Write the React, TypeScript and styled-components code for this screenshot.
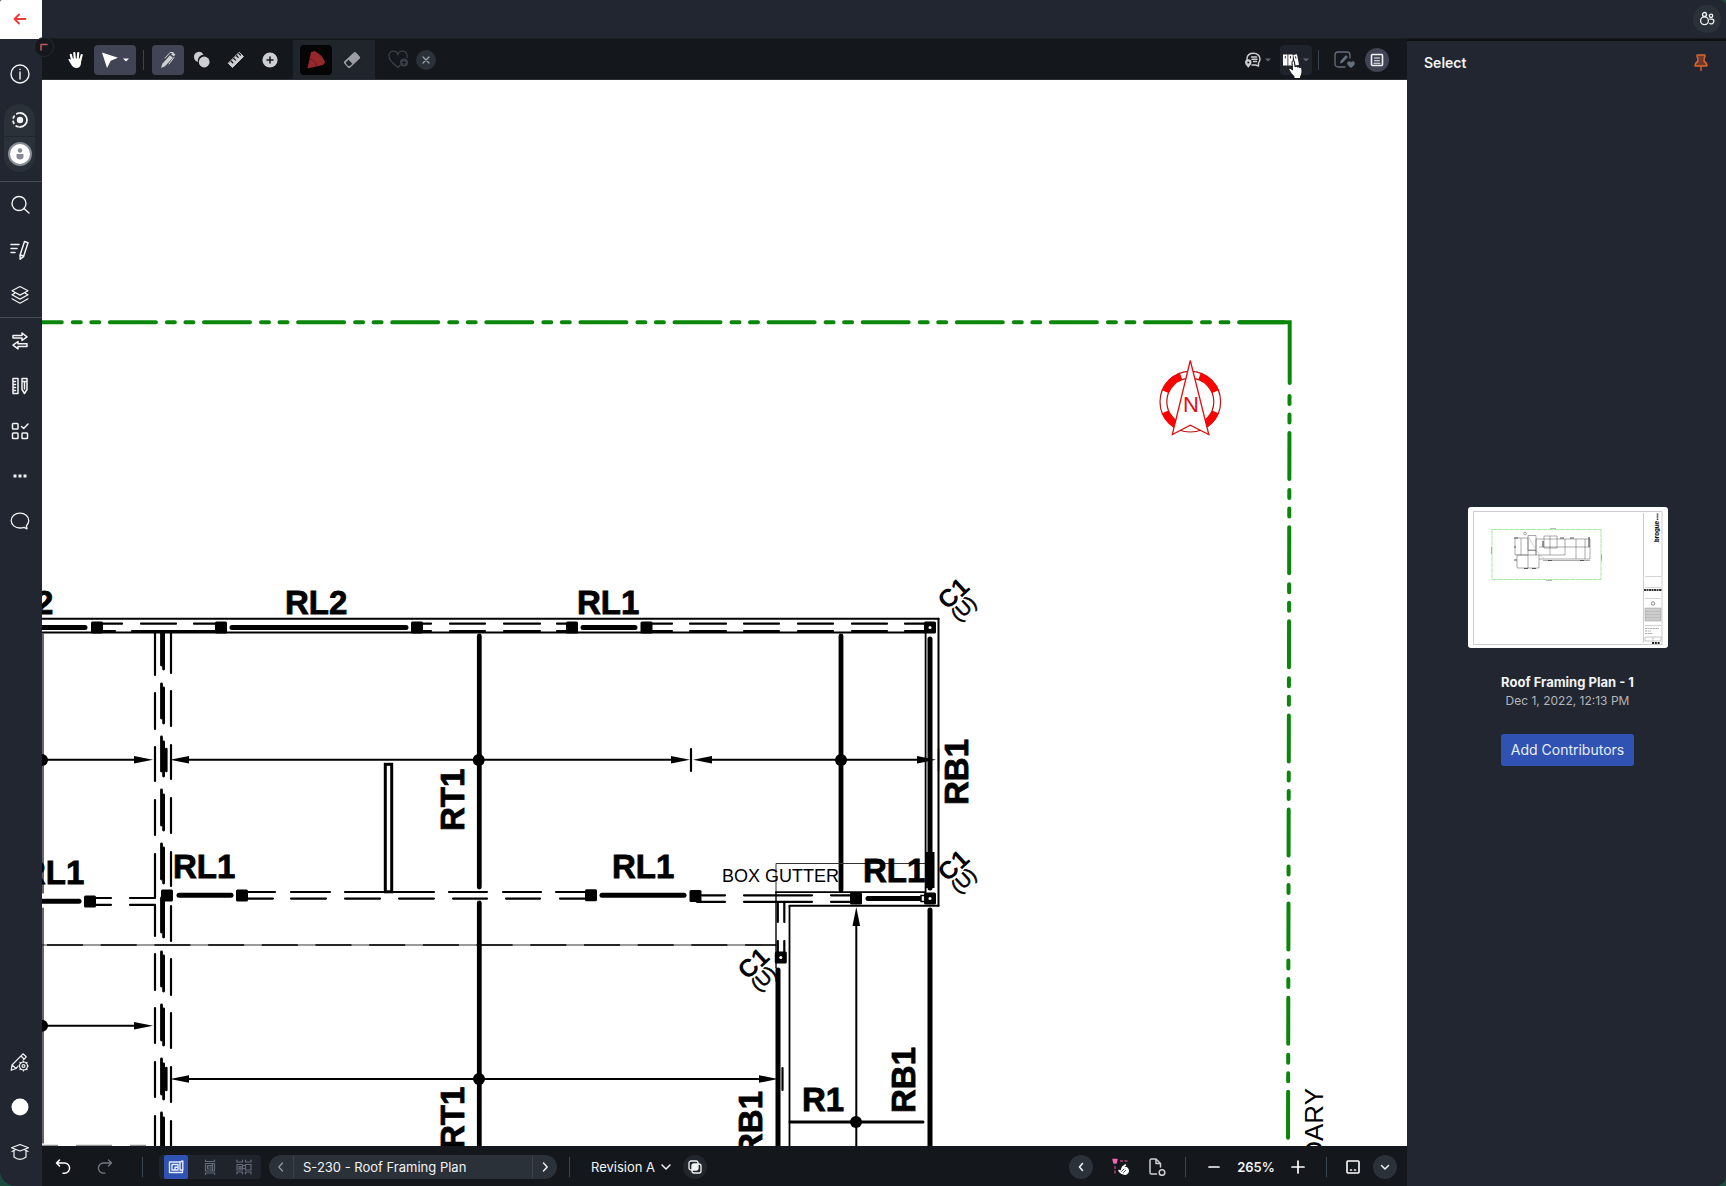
import React from 'react';
import styled, { createGlobalStyle, css } from 'styled-components';

const c = {
  shell: '#222630',
  bar: '#14171c',
  raised: '#2a3139',
  hover: '#404454',
  line: '#3a4450',
  soft: '#8b929c',
  text: '#f2f3f5',
  blue: '#3053b3',
};

const Global = createGlobalStyle`
  *, *::before, *::after { box-sizing: border-box; }
  html, body { margin: 0; background: #1d4a3f; }
  body { font-family: Inter, "Liberation Sans", sans-serif; color: ${c.text}; }
  button { font: inherit; color: inherit; border: 0; padding: 0; background: none; cursor: pointer; }
  h1, h2, p { margin: 0; }
`;

/* ---------- layout ---------- */

const Shell = styled.div`
  display: flex;
  height: 100vh;
  overflow: hidden;
  background: ${c.shell};
  border-radius: 2px 6px 10px 16px;
`;

const Sidebar = styled.nav`
  display: flex;
  flex-direction: column;
  flex: none;
  width: 42px;
  background: ${c.shell};
`;

const Column = styled.div`
  display: flex;
  flex-direction: column;
  flex: 1;
  min-width: 0;
`;

const Header = styled.header`
  display: flex;
  justify-content: flex-end;
  align-items: center;
  flex: none;
  height: 39px;
  padding-right: 5px;
  border-bottom: 1px solid #181b22;
`;

const Body = styled.div`
  display: flex;
  flex: 1;
  min-height: 0;
`;

const Work = styled.main`
  display: flex;
  flex-direction: column;
  flex: 1;
  min-width: 0;
`;

const TopBar = styled.div`
  position: relative;
  display: flex;
  justify-content: space-between;
  flex: none;
  height: 41px;
  padding: 1px 18px 0 18px;
  background: ${c.bar};
  border-bottom: 1px solid #2b3038;
`;

const Tools = styled.div<{ $gap: number }>`
  display: flex;
  align-items: center;
  gap: ${(p) => p.$gap}px;
`;

const Sheet = styled.div`
  flex: 1;
  min-height: 0;
  background: #fff;
`;

const Drawing = styled.svg`
  display: block;
  width: 100%;
  height: 100%;
`;

const BottomBar = styled.footer`
  display: flex;
  justify-content: space-between;
  flex: none;
  height: 40px;
  padding: 2px 10px 0 5px;
  background: ${c.bar};
`;

const Panel = styled.aside`
  display: flex;
  flex-direction: column;
  flex: none;
  width: 319px;
  border-top: 2px solid #0d0f13;
`;

/* ---------- controls ---------- */

const Back = styled.button`
  display: grid;
  place-items: center;
  flex: none;
  height: 39px;
  padding: 0 3px 2px 0;
  background: #fff;
`;

const SideGroup = styled.div<{ $rule?: boolean; $end?: boolean }>`
  display: flex;
  flex-direction: column;
  padding-right: 3px;
  ${(p) => p.$rule && css`border-bottom: 1px solid #454a54;`}
  ${(p) => p.$end && css`margin-top: auto; padding-bottom: 12px;`}
`;

const SideButton = styled.button`
  display: grid;
  place-items: center;
  height: 45px;
`;

const InfoGroup = styled(SideGroup)`
  height: 143px;
  padding-top: 12px;
  align-items: center;
`;

const Pill = styled.div`
  display: flex;
  flex-direction: column;
  width: 31px;
  margin-top: 8px;
  border-radius: 16px;
  background: ${c.raised};
`;

const PillButton = styled.button`
  display: grid;
  place-items: center;
  height: 32px;
  & + & { height: 36px; padding-bottom: 2px; border-top: 1px solid ${c.shell}; }
`;

const Avatar = styled.span`
  display: grid;
  place-items: center;
  width: 24px;
  height: 24px;
  border: 2px solid #868b94;
  border-radius: 50%;
  background: #fff;
`;

const Tool = styled.button<{ $w?: number; $tone?: string; $ink?: string; $lead?: number }>`
  position: relative;
  display: flex;
  align-items: center;
  justify-content: center;
  gap: 4px;
  width: ${(p) => p.$w ?? 32}px;
  height: 30px;
  padding-left: ${(p) => p.$lead ?? 0}px;
  border-radius: 4px;
  background: ${(p) => p.$tone ?? 'transparent'};
  color: ${(p) => p.$ink ?? '#cdced1'};
`;

const Round = styled.button<{ $size?: number; $tone?: string; $ink?: string }>`
  display: grid;
  place-items: center;
  flex: none;
  width: ${(p) => p.$size ?? 24}px;
  height: ${(p) => p.$size ?? 24}px;
  border-radius: 50%;
  background: ${(p) => p.$tone ?? c.raised};
  color: ${(p) => p.$ink ?? c.text};
`;

const Rule = styled.span<{ $l?: number; $r?: number }>`
  width: 1px;
  height: 20px;
  margin: 0 ${(p) => p.$r ?? 0}px 0 ${(p) => p.$l ?? 0}px;
  background: ${c.line};
`;

const BrushGroup = styled.div`
  display: flex;
  align-items: center;
  gap: 4px;
  height: 39px;
  margin: 0 5px 0 5px;
  padding: 0 7px;
  background: #20242b;
`;

const Corner = styled.button`
  position: absolute;
  left: -8px;
  top: -2px;
  width: 20px;
  height: 20px;
  border-radius: 50%;
  background: #14171c;
  border: 1px solid #242933;
  display: grid;
  place-items: center;
`;

const Pointer = styled.svg`
  position: absolute;
  left: 7px;
  top: 15px;
`;

const Segments = styled.div`
  display: flex;
  gap: 10px;
  padding: 0 5px;
  border-radius: 4px;
  background: #1f232c;
`;

const Segment = styled.button<{ $on?: boolean }>`
  display: grid;
  place-items: center;
  width: 24px;
  height: 24px;
  border-radius: 2px;
  background: ${(p) => (p.$on ? c.blue : 'transparent')};
  color: ${(p) => (p.$on ? '#e6ebf8' : '#626a77')};
`;

const PageNav = styled.div`
  display: flex;
  align-items: center;
  width: 288px;
  height: 24px;
  border-radius: 12px;
  background: ${c.raised};
`;

const PageStep = styled.button<{ $dim?: boolean }>`
  display: grid;
  place-items: center;
  width: 24px;
  height: 24px;
  color: ${(p) => (p.$dim ? '#9299a3' : c.text)};
`;

const PageName = styled.span`
  flex: 1;
  padding-left: 9px;
  border: solid #3b434d;
  border-width: 0 1px;
  font-size: 13px;
  line-height: 22px;
`;

const Revision = styled.button`
  display: flex;
  align-items: center;
  justify-content: space-between;
  width: 84px;
  padding-right: 3px;
  font-size: 13px;
  line-height: 24px;
  white-space: nowrap;
`;

const Zoom = styled.output`
  width: 44px;
  text-align: center;
  font-size: 13px;
  font-weight: 600;
`;

const PanelHead = styled.div`
  display: flex;
  align-items: center;
  justify-content: space-between;
  height: 43px;
  padding: 0 16px 0 17px;
`;

const PanelTitle = styled.h1`
  font-size: 14px;
  font-weight: 600;
  line-height: 20px;
`;

const Card = styled.section`
  display: flex;
  flex: 1;
  flex-direction: column;
  align-items: center;
  justify-content: center;
  padding: 2px 0 0 2px;
`;

const Thumb = styled.svg`
  width: 200px;
  height: 141px;
  border-radius: 3px;
  background: #fff;
  margin-bottom: 24px;
`;

const CardTitle = styled.h2`
  font-size: 13px;
  font-weight: 700;
  line-height: 20px;
`;

const CardDate = styled.p`
  font-size: 12px;
  line-height: 18px;
  color: #b3b6bb;
  margin-bottom: 24px;
`;

const Primary = styled.button`
  height: 32px;
  width: 133px;
  border-radius: 3px;
  background: ${c.blue};
  font-size: 14px;
  color: #e9edf7;
`;

/* ---------- icons ---------- */

type IcoProps = { s?: number; w?: number; sw?: number; children: React.ReactNode };
const Ico = ({ s = 20, w, sw = 1.5, children }: IcoProps) => (
  <svg width={w ?? s} height={s} viewBox={`0 0 ${w ?? s} ${s}`} fill="none" stroke="currentColor"
    strokeWidth={sw} strokeLinecap="round" strokeLinejoin="round" aria-hidden="true">{children}</svg>
);
const solid = { fill: 'currentColor', stroke: 'none' };

const Caret = () => <Ico s={6} sw={0}><path d="M0 1.500h6L3 4.500z" {...solid} /></Ico>;

const Gear = ({ x, y }: { x: number; y: number }) => (
  <g transform={`translate(${x} ${y})`}>
    <circle r="4" /><circle r="1.4" />
    {[0, 45, 90, 135, 180, 225, 270, 315].map((a) => <path key={a} d="M0-4v-1" transform={`rotate(${a})`} />)}
  </g>
);

const sideMain = [
  { label: 'Search', icon: <Ico sw={1.4}><circle cx="9" cy="8.500" r="7" /><path d="M14 13.500l5 4.500" /></Ico> },
  { label: 'Markups', icon: <Ico sw={1.5}><path d="M1 4.500h8M1 8.500h6M1 12.500h4M14.500 1.500l3.500 1.200-4.500 14-3.300 2.500-.2-4z" /><path d="M10.500 15l2.700 1" /></Ico> },
  { label: 'Layers', icon: <Ico sw={1.2}><path d="M10 1.500l8 4.300-8 4.300-8-4.300zM2 9.800l8 4.300 8-4.300M2 13.800l8 4.400 8-4.400M2 9.800l2.600-1.400M18 9.800l-2.600-1.400" /></Ico> },
];
const sideTools = [
  { label: 'Compare', icon: <Ico sw={1.5}><path d="M3 4.500h9V2l5 3.800L12 9.500V7H3zM17 12.800H8v-2.300l-5 3.700 5 3.700v-2.500h9z" /></Ico> },
  { label: 'Measurements', icon: <Ico sw={1.5}><path d="M3 2.500h5v15H3zM3.500 5.500h2M3.500 8.500h2M3.500 11.500h2M3.500 14.500h2M12 2.500h5v11l-2.500 4-2.500-4zM12 5.500h5M14.500 6v7" /></Ico> },
  { label: 'Checklists', icon: <Ico sw={1.5}><rect x="2.500" y="2.500" width="5.500" height="5.500" rx=".8" /><rect x="2.500" y="12" width="5.500" height="5.500" rx=".8" /><rect x="12" y="12" width="5.500" height="5.500" rx=".8" /><path d="M11.500 5.500l2.200 2L18 3" /></Ico> },
  { label: 'More', icon: <Ico><path d="M3.500 8.500h3v3h-3zM8.500 8.500h3v3h-3zM13.500 8.500h3v3h-3z" {...solid} /></Ico> },
  { label: 'Comments', icon: <Ico sw={1.3}><path d="M10 2.200c-5 0-8.800 3.200-8.800 7.400S5 17 10 17c1.500 0 2.800-.2 4-.7l3 1.500-.6-3c1.500-1.400 2.300-3.200 2.300-5.200 0-4.200-3.700-7.400-8.700-7.400z" /></Ico> },
];
const sideEnd = [
  { label: 'Markup settings', icon: <Ico sw={1.2}><path d="M2 13L13 1.800l3.200 3L6 16.500l-4.800 1.800zM2 13l3.800 3.200M11 4l3 3" /><circle cx="13.500" cy="14" r="5.800" fill={c.shell} stroke="none" /><Gear x={13.5} y={14} /></Ico> },
  { label: 'Status', icon: <Ico><circle cx="10" cy="10" r="8.500" fill="#fff" stroke="none" /></Ico> },
  { label: 'Learn', icon: <Ico sw={1.2}><path d="M10 2.500l8.500 3.200L10 9 1.500 5.700zM4 8v7c2 1.600 4 2.300 6 2.300s4-.7 6-2.300V8M2 9.500l3-1.500M18 9.500L15 8" /></Ico> },
];

/* ---------- plan drawing ---------- */

type Seg = [number, number][];
const H = ({ y, s, w = 2.2 }: { y: number; s: Seg; w?: number }) => (
  <path d={s.map(([a, b]) => `M${a} ${y}H${b}`).join('')} strokeWidth={w} />
);
const V = ({ x, s, w = 2.2 }: { x: number; s: Seg; w?: number }) => (
  <path d={s.map(([a, b]) => `M${x} ${a}V${b}`).join('')} strokeWidth={w} />
);
const Post = ({ x, y, open }: { x: number; y: number; open?: boolean }) => (
  <g stroke="none"><rect x={x - 6} y={y - 6} width="12" height="12" rx="1.500" />{open && <circle cx={x} cy={y} r="1.500" fill="#fff" />}</g>
);
const Dot = ({ x, y }: { x: number; y: number }) => <circle cx={x} cy={y} r="6" stroke="none" />;
const Head = ({ x, y, a = 0 }: { x: number; y: number; a?: number }) => (
  <path d="M0 0L-19-3.800V3.800z" stroke="none" transform={`translate(${x} ${y}) rotate(${a})`} />
);
const Label = ({ x, y, a = 0, children }: { x: number; y: number; a?: number; children: string }) => (
  <text transform={`translate(${x} ${y}) rotate(${a})`} fontSize="33" fontWeight="700" strokeWidth=".8">{children}</text>
);
const ColumnTag = ({ x, y }: { x: number; y: number }) => (
  <g transform={`translate(${x} ${y}) rotate(-43)`} stroke="none">
    <text fontSize="25" fontWeight="700" x="-16" y="9">C1</text>
    <text fontSize="19" x="-16" y="25" stroke="#000" strokeWidth=".6">(U)</text>
  </g>
);

const ringArc = (from: number, to: number) => {
  const p = (a: number) => `${1190.3 + 27 * Math.cos((a * Math.PI) / 180)} ${401.7 + 27 * Math.sin((a * Math.PI) / 180)}`;
  return `M${p(from)}A27 27 0 0 1 ${p(to)}`;
};

const Plan = () => (
  <Drawing viewBox="42 80 1365 1066" preserveAspectRatio="xMinYMin slice" role="img" aria-label="Roof framing plan"
    fontFamily='"Liberation Sans", Arial, sans-serif' stroke="#000" fill="#000" strokeLinecap="round">
    <g stroke="#0a860a" strokeWidth="4" fill="none">
      <path d="M15.800 322.300H1284" strokeDasharray="46 11 8 10.500 8 10.600" />
      <path d="M1240 322.300H1289.700V383" />
      <path d="M1289.500 396L1288 1150" strokeDasharray="46 11 8 10.500 8 10.600" strokeDashoffset="57" />
    </g>
    <g fill="none" stroke="#f00">
      <circle cx="1190.300" cy="401.700" r="30.300" strokeWidth="1.200" stroke="#c01010" />
      <circle cx="1190.300" cy="401.700" r="23.500" strokeWidth="1.200" stroke="#c01010" />
      <path d={[[-158, -110], [-70, -22], [22, 70], [110, 158]].map(([a, b]) => ringArc(a, b)).join('')} strokeWidth="7" strokeLinecap="butt" />
      <path d="M1190.300 360.500L1208.800 434.500 1190.300 425.200 1172.300 434.500z" fill="#fff" strokeWidth="1.300" stroke="#e01010" />
      <text x="1191" y="412" fontSize="22" textAnchor="middle" fill="#e01010" stroke="none">N</text>
    </g>

    <H y={618.7} s={[[42, 938.5]]} w={2} />
    <H y={632.5} s={[[42, 925]]} w={1.8} />
    <H y={623.7} s={[[101, 122], [141, 176], [194, 218], [423, 431], [450, 485], [504, 540], [557, 574], [648, 672], [690, 726], [744, 779], [798, 833], [852, 887], [905, 926]]} />
    <H y={631} s={[[101, 115], [132, 218], [423, 431], [450, 485], [504, 540], [557, 574], [648, 672], [690, 726], [744, 779], [798, 833], [852, 887], [905, 926]]} />
    <H y={627.5} w={5} s={[[42, 85], [232, 406], [583, 635]]} />
    {[97, 221, 417, 572, 646.5].map((x) => <Post key={x} x={x} y={627.6} />)}
    <Post x={930} y={627.5} open />

    <V x={155} s={[[633, 675], [693, 729], [747, 781], [800, 835], [854, 897], [906, 936], [954, 990], [1008, 1043], [1062, 1097], [1116, 1150]]} />
    <V x={161.5} w={2.8} s={[[632, 665], [684, 718], [737, 771], [790, 825], [844, 879], [898, 932], [952, 986], [1005, 1040], [1059, 1094], [1113, 1150]]} />
    <V x={163.6} w={2.8} s={[[632, 669], [688, 723], [742, 776], [795, 830], [848, 883], [898, 937], [956, 991], [1009, 1045], [1064, 1099], [1118, 1150]]} />
    <V x={171} s={[[633, 673], [691, 726], [745, 779], [798, 833], [852, 886], [906, 941], [959, 995], [1013, 1048], [1067, 1102], [1121, 1150]]} />
    <V x={166.3} w={2.6} s={[[749, 771], [1068, 1090]]} />
    <V x={43} w={1.2} s={[[634, 893], [908, 1143]]} />

    <H y={759.8} w={2} s={[[42, 140], [180, 680], [704, 925]]} />
    <Dot x={42} y={760} /><Head x={153} y={759.8} /><Head x={170} y={759.8} a={180} />
    <Head x={690} y={759.8} /><Head x={693} y={759.8} a={180} /><Head x={936} y={759.8} />
    <V x={691} s={[[749, 771]]} /><V x={938.5} s={[[749, 771]]} w={1.5} />
    <Dot x={478.7} y={760} /><Dot x={841} y={760} />
    <H y={1079} w={2} s={[[182, 768]]} />
    <Head x={170} y={1079} a={180} /><Head x={778} y={1079} /><Dot x={479} y={1079} /><V x={782.5} s={[[1068, 1090]]} />
    <H y={1025.7} w={2} s={[[42, 140]]} /><Head x={153} y={1025.7} /><Dot x={42} y={1025.7} />

    <V x={479.3} w={4.8} s={[[636, 887], [903, 1150]]} />
    <V x={841} w={4.8} s={[[636, 890]]} />
    <rect x="385.300" y="764.300" width="6.400" height="127.500" fill="none" strokeWidth="3" />

    <H y={901.2} w={5} s={[[42, 79]]} /><Post x={90} y={901.5} />
    <H y={898} s={[[96, 111], [130, 155]]} /><H y={904.8} s={[[96, 111], [130, 155]]} />
    <Post x={167} y={895.5} /><H y={895.2} w={5} s={[[179, 231]]} /><Post x={242} y={895.5} />
    <H y={892} s={[[248, 275], [291, 330], [345, 434], [449, 487], [503, 541], [556, 586]]} />
    <H y={898.6} s={[[248, 273], [291, 326], [345, 380], [399, 434], [453, 487], [506, 540], [560, 586]]} />
    <Post x={591} y={895.3} /><H y={895.3} w={5} s={[[602, 684]]} /><Post x={695.5} y={896} />
    <H y={895.3} s={[[702, 725], [744, 812], [831, 852]]} /><H y={901.8} s={[[697, 725], [744, 812], [831, 852]]} />
    <H y={892.2} w={1.8} s={[[776, 925]]} /><H y={905.8} w={2} s={[[789.5, 938.5]]} />
    <Post x={856} y={898.5} /><H y={898.5} w={5} s={[[868, 920]]} />
    <rect x="921" y="895.500" width="5" height="6" fill="#fff" strokeWidth="1.500" /><Post x={930} y={898.5} open />

    <path d="M776 892V863.500H925" fill="none" stroke="#333" strokeWidth="1" />
    <V x={776} w={1.4} s={[[892, 968]]} /><V x={789.5} w={1.8} s={[[906, 1150]]} />
    <V x={777.8} s={[[903, 922], [941, 953]]} /><V x={784.3} s={[[903, 922], [941, 953]]} />
    <Post x={780.8} y={957.6} open /><V x={778} w={5} s={[[970, 1150]]} />
    <V x={925.6} w={1.8} s={[[633, 892]]} /><V x={938.5} w={2} s={[[618.7, 905.8]]} />
    <V x={930} w={5} s={[[639, 888], [910, 1150]]} />
    <path d="M930 852V888" strokeWidth="9" strokeLinecap="butt" />
    <H y={945} w={0.8} s={[[42, 776]]} />
    <path d="M47 945H776" strokeWidth="1.400" strokeDasharray="36 17.700" strokeLinecap="butt" />
    <path d="M42 1145.300H155" stroke="#777" strokeWidth="1" strokeDasharray="16 18 36 18" strokeLinecap="butt" />
    <V x={856.3} w={2} s={[[920, 1150]]} /><Head x={856.3} y={907} a={-90} />
    <H y={1122} w={3} s={[[790, 923]]} /><Dot x={856} y={1122} />

    <Label x={35} y={614}>2</Label>
    <Label x={285} y={614}>RL2</Label>
    <Label x={577} y={614}>RL1</Label>
    <Label x={22} y={884}>RL1</Label>
    <Label x={173} y={878}>RL1</Label>
    <Label x={612} y={878}>RL1</Label>
    <Label x={863} y={882}>RL1</Label>
    <Label x={802} y={1111}>R1</Label>
    <Label x={464} y={831} a={-90}>RT1</Label>
    <Label x={464} y={1149} a={-90}>RT1</Label>
    <Label x={968} y={805} a={-90}>RB1</Label>
    <Label x={915} y={1113} a={-90}>RB1</Label>
    <Label x={762} y={1157} a={-90}>RB1</Label>
    <text x="722" y="882" fontSize="18" stroke="none">BOX GUTTER</text>
    <text transform="translate(1323 1088) rotate(-90)" fontSize="26" textAnchor="end" stroke="none">BOUNDARY</text>
    <ColumnTag x={953} y={593} /><ColumnTag x={953} y={865} /><ColumnTag x={753} y={963} />
  </Drawing>
);

const Preview = () => (
  <Thumb viewBox="0 0 200 141" fill="none" stroke="#777" strokeWidth=".5" role="img" aria-label="Sheet preview">
    <path d="M5.500 4.500H194V137.500H5.500zM175.500 6V136" stroke="#999" />
    <path d="M24 22.500H133V72.500H24z" stroke="#8fe08f" strokeWidth=".8" strokeDasharray="5 .6" />
    <path d="M82 21.500H88M78 73.500H84M23.500 40V47M133.500 47V54" stroke="#777" />
    <g stroke="#555">
      <path d="M47 31h13v17H47zM60 28.500h8v15h-8zM49 48h22v13H49zM68 32h54v20H71M76 29h13v12H76zM97 32v16M108 32v20M117 32v20M60 48v13M53 31v17M82 29v19M71 40h51M60 43h8v5M68 32v16M71 48h26M75 53.500h47" />
      <path d="M46 31h4M46 40h2M46 53h3M56 61.500h4M64 61.500h4M75 34v6M80 53.500h4M102 31h4M92 31h4M112 53.500h4M121 30v10" strokeWidth="1.200" />
      <path d="M60 29l8 14M68 43l8 9" stroke="#aaa" /><circle cx="57" cy="26.500" r="1.300" />
    </g>
    <text transform="translate(191 35) rotate(-90)" fontSize="6" fontWeight="800" fill="#111" stroke="none" fontFamily="Inter, sans-serif">brogue</text>
    <path d="M189.500 13V6" strokeWidth="1.600" stroke="#444" strokeDasharray="1 .4" />
    <path d="M177 69.500h16M177 80.500h16M177 91.500h16M177 118.500h16" stroke="#aaa" />
    <path d="M176 83h18" strokeWidth="1.800" stroke="#333" strokeDasharray="2 .5" />
    <circle cx="185" cy="96.500" r="1.700" stroke="#222" />
    <path d="M177 101h16v13h-16z" fill="#ccc" stroke="#999" />
    <path d="M177 104.500h16M177 107.500h16M177 110.500h16" stroke="#aaa" strokeWidth=".5" />
    <path d="M177 121.500h14M177 124h6M177 126.500h8" stroke="#555" strokeDasharray="2 .6" />
    <path d="M177 130h16v4h-16zM185 130v4" stroke="#888" /><path d="M184 136h8" stroke="#222" strokeWidth="1.800" strokeDasharray="2 .8" />
  </Thumb>
);

/* ---------- app ---------- */

export default function App() {
  return (
    <>
      <Global />
      <Shell>
        <Sidebar aria-label="Project">
          <Back aria-label="Back">
            <svg width="14" height="12" viewBox="0 0 14 12" fill="none" stroke="#ee3a3a" strokeWidth="1.900" strokeLinecap="round" strokeLinejoin="round"><path d="M12.500 6H1.500M6 1.500L1.500 6 6 10.500" /></svg>
          </Back>
          <InfoGroup $rule>
            <SideButton aria-label="Info"><Ico sw={1.4}><circle cx="10" cy="10" r="9" /><path d="M10 8v7M10 5.200v.3" /></Ico></SideButton>
            <Pill>
              <PillButton aria-label="Record">
                <Ico s={18} sw={1.8}><circle cx="9" cy="9" r="3.200" {...solid} /><path d="M9 2a7 7 0 0 1 0 14" /><path d="M9 16a7 7 0 0 1 0-14" strokeDasharray="2 3.500" strokeDashoffset="-2" /></Ico>
              </PillButton>
              <PillButton aria-label="Account">
                <Avatar><Ico s={14}><g fill="#868b94" stroke="none"><circle cx="7" cy="3.500" r="2.200" /><path d="M3.500 7h7v2.500a3.500 3 0 0 1-7 0z" /></g></Ico></Avatar>
              </PillButton>
            </Pill>
          </InfoGroup>
          <SideGroup $rule>{sideMain.map((i) => <SideButton key={i.label} aria-label={i.label}>{i.icon}</SideButton>)}</SideGroup>
          <SideGroup>{sideTools.map((i) => <SideButton key={i.label} aria-label={i.label}>{i.icon}</SideButton>)}</SideGroup>
          <SideGroup $end>{sideEnd.map((i) => <SideButton key={i.label} aria-label={i.label}>{i.icon}</SideButton>)}</SideGroup>
        </Sidebar>

        <Column>
          <Header>
            <Round $size={28} aria-label="Participants">
              <Ico s={16} sw={1.3}><circle cx="5.500" cy="3.500" r="2" /><circle cx="5.500" cy="9.800" r="3.900" /><circle cx="12" cy="4.800" r="1.700" /><path d="M10.800 8.200h2.500a2 2 0 0 1 1.500 2.300 2.600 2.600 0 0 1-4 2" /></Ico>
            </Round>
          </Header>
          <Body>
            <Work>
              <TopBar>
                <Corner aria-label="Collapse"><Ico s={8} sw={1.6}><path d="M1 7V1.500H7" stroke="#b8595d" /></Ico></Corner>
                <Tools $gap={2}>
                  <Tool aria-label="Pan" $ink="#fff">
                    <Ico s={18}>
                      <path d="M5 8.500L3.800 3.800M7.800 8L7.300 2M10.700 8L11.200 2M13.300 9L14.700 4" strokeWidth="2.200" />
                      <path d="M1.300 8.500c1-.8 2.200-.3 3 .7V7.500h10.200l-.6 5.500c-.4 2.500-2 4-4.400 4-2.600 0-4-1.300-5.300-3.500z" {...solid} />
                    </Ico>
                  </Tool>
                  <Tool $w={42} $tone={c.hover} $ink="#fff" aria-label="Select">
                    <Ico s={18}><path d="M1 1.500l16 5.300-7.300 3L6 17z" {...solid} /></Ico><Caret />
                  </Tool>
                  <Rule $l={5} $r={6} />
                  <Tool $tone={c.hover} aria-label="Pen">
                    <Ico s={18}><path d="M11 4.200l3 2.500-8 8.500-4 1.800 1.300-4.300z" {...solid} /><path d="M12 3.200L14 1.500l2.300 2L15 5.600z" {...solid} /><path d="M6 7L11 1.500h3M15 6.500l-5 6.500" strokeWidth="1" /></Ico>
                  </Tool>
                  <Tool aria-label="Shapes">
                    <Ico s={18}><path d="M1 6a5 5 0 0 1 9.500-2.300C6.500 4 4.300 7.500 5 11A5.500 5.500 0 0 1 1 6z" {...solid} /><circle cx="11.200" cy="11" r="5.400" {...solid} /></Ico>
                  </Tool>
                  <Tool aria-label="Measure">
                    <Ico s={18} sw={1}><path d="M12.500 1.500l4 4L5.500 16.500l-4-4z" fill="currentColor" /><path d="M4.200 10.200l1.600 1.600M6.900 7.500l1.600 1.600M9.600 4.800l1.600 1.600M12 2.500l1.600 1.600" stroke={c.bar} strokeWidth="1.300" /></Ico>
                  </Tool>
                  <Tool aria-label="Add">
                    <Ico s={18}><circle cx="9" cy="9" r="7.600" {...solid} /><path d="M9 6v6M6 9h6" stroke={c.bar} /></Ico>
                  </Tool>
                  <BrushGroup>
                    <Tool $tone="#050506" $ink="#96282b" aria-label="Brush">
                      <Ico><path d="M5 2l3.500-1C14 3.500 17.500 7.500 19 12.500L17 15 1.500 18.500z" {...solid} /><path d="M4 9c3.500 1 6 3.500 7 7" stroke="#6a1b1e" strokeWidth="1" /></Ico>
                    </Tool>
                    <Tool $ink="#9a9da3" aria-label="Eraser">
                      <Ico s={18}><rect x="-8" y="-4.300" width="16" height="8.600" rx="1.600" transform="translate(9 9) rotate(-43)" {...solid} /><path d="M5.500 8.800l3.900 3.900-2.300 2.100c-.6.600-1.400.6-2 0l-1.700-1.700c-.6-.6-.6-1.400 0-2z" fill="#20242b" stroke="none" /></Ico>
                    </Tool>
                  </BrushGroup>
                  <Tool $ink="#3c4048" aria-label="Add favourite">
                    <Ico sw={1.3}><path d="M12 15.500l-2 2C5.500 13.800 1 10.500 1 6.500a4.500 4.500 0 0 1 9-1.700 4.500 4.500 0 0 1 9 1.700v1" /><circle cx="16" cy="12.500" r="4" {...solid} /><path d="M16 10.800v3.400M14.300 12.500h3.400" stroke={c.bar} strokeWidth="1.200" /></Ico>
                  </Tool>
                  <Round $size={20} $ink="#a3a7ad" aria-label="Close"><Ico s={8} sw={1.2}><path d="M1 1l6 6M7 1L1 7" /></Ico></Round>
                </Tools>
                <Tools $gap={6}>
                  <Tool aria-label="Stamps">
                    <Ico s={16} sw={1.5}><path d="M2 8V6.500C2.300 3.200 5 1.300 8.500 1.300c3.600 0 6.500 2.400 6.500 5.700 0 1.800-.6 3-1.500 4v3L10.500 13H7M6.500 5h5M7 7.200h5M8.500 9.500h3" /><path d="M3.300 8a2.500 2.500 0 0 1 2.500 2.500c0 1.600-1.300 2.500-2.500 4.200C2 13 .8 12.100.8 10.500A2.500 2.500 0 0 1 3.300 8z" fill="currentColor" /><circle cx="3.300" cy="10.500" r="1" fill={c.bar} stroke="none" /></Ico>
                    <Ico s={6}><path d="M0 1.500h6L3 4.500z" fill="#626873" stroke="none" /></Ico>
                  </Tool>
                  <Tool $tone="#1f232c" $ink="#fff" aria-label="Library">
                    <Ico s={16}><path d="M0 2.500h4.500v11H0zM5.300 2.500h4.500v11H5.300zM10.300 3l3.700-.8 2 10.500-3.700.8z" {...solid} /><path d="M2.300 4.500v1.500M7.500 4.500v1.500M12.600 4.800l.3 1.400" stroke="#1f232c" strokeWidth="1" /></Ico>
                    <Ico s={6}><path d="M0 1.500h6L3 4.500z" fill="#626873" stroke="none" /></Ico>
                    <Pointer width="18" height="20" viewBox="0 0 18 20" fill="#fff" stroke="#111" strokeWidth="1" strokeLinejoin="round" aria-hidden="true">
                      <path d="M5 2c0-1.600 2.400-1.600 2.500 0l.6 5c.6-1 2-.8 2.300.2.700-.8 2-.5 2.200.5.900-.6 2-.2 2.200.8.500 3.500.2 6-1.300 8v2H7v-2C5 14.500 3.500 12.500 2 10c-.7-1.400.9-2.300 2-1.200L5.500 10z" />
                    </Pointer>
                  </Tool>
                  <Rule />
                  <Tool $w={34} $lead={6} $ink="#66707d" aria-label="Edit favourites">
                    <Ico s={18} w={22} sw={1.3}><path d="M11 16H4a3 3 0 0 1-3-3V4a3 3 0 0 1 3-3h9a3 3 0 0 1 3 3v3" /><path d="M6 12.500l.6-2.800L12 4l2 2-5.500 5.800z" {...solid} /><path d="M17 17c-2-1.600-3.800-3-3.800-4.700a2 2 0 0 1 3.800-.9 2 2 0 0 1 3.800.9c0 1.700-1.800 3.100-3.800 4.700z" {...solid} /></Ico>
                  </Tool>
                  <Round $tone={c.hover} aria-label="Notes"><Ico s={14} sw={1.6}><rect x="1.500" y="1.500" width="11" height="11" rx="1" /><path d="M4.500 5h5M4.500 7.800h5M4 10.300h6" strokeWidth="1.100" /></Ico></Round>
                </Tools>
              </TopBar>

              <Sheet><Plan /></Sheet>

              <BottomBar>
                <Tools $gap={8}>
                  <Tools $gap={10}>
                    <Tool $ink="#fff" aria-label="Undo"><Ico s={16} sw={1.5}><path d="M4.500 1L1.500 4l3 3M2 4h7.500a5 5 0 0 1 0 10.200H8" /></Ico></Tool>
                    <Tool $ink="#747981" aria-label="Redo"><Ico s={16} sw={1.3}><path d="M11.500 1l3 3-3 3M14 4H6.500a5 5 0 0 0 0 10.200H8" /></Ico></Tool>
                  </Tools>
                  <Rule $l={13} $r={8} />
                  <Segments>
                    <Segment $on aria-label="Single sheet"><Ico s={16} sw={1.4}><path d="M12 3H1.500v10.500h13V11M4 5.500h6v5.500H4zM7 8.200h3M7 8.200v2.500M12 3v8M14.800 2v9M12 3l2.800-1M12 11h2.800" /></Ico></Segment>
                    <Segment aria-label="Continuous"><Ico s={16} sw={1.2}><path d="M3.500 1v1.500h9V1M3.500 15.500V14h9v1.500M3.500 4.500h9v7.500h-9zM5.500 6.500h5v3.500h-5zM7 8h2.500M10.500 4.500v7" /></Ico></Segment>
                    <Segment aria-label="Grid"><Ico s={16} sw={1.2}><path d="M1 1v2h5.500V1M9.500 1v2H15V1M1 15v-2h5.500v2M9.500 15v-2H15v2M1 5.500h5.500V11H1zM9.500 5.500H15V11H9.500zM3 7.500h2v2H3zM6.500 6.500h3M6.500 9.500h3" /></Ico></Segment>
                  </Segments>
                  <PageNav>
                    <PageStep $dim aria-label="Previous sheet"><Ico s={10} sw={1.3}><path d="M6.500 1L2.800 5l3.700 4" /></Ico></PageStep>
                    <PageName>S-230 - Roof Framing Plan</PageName>
                    <PageStep aria-label="Next sheet"><Ico s={10} sw={1.4}><path d="M3.500 1l3.700 4-3.700 4" /></Ico></PageStep>
                  </PageNav>
                  <Rule $l={4} $r={13} />
                  <Revision>Revision A<Ico s={12} sw={1.5}><path d="M2 4l4 4 4-4" /></Ico></Revision>
                  <Round $tone="#21262d" aria-label="Overlay"><Ico s={14} sw={1.3}><rect x="1" y="1" width="9" height="9" rx="2" /><rect x="4" y="4" width="9" height="9" rx="2" /><rect x="4" y="4" width="6" height="6" rx="1" {...solid} /></Ico></Round>
                </Tools>
                <Tools $gap={8}>
                  <Tools $gap={14}>
                    <Round aria-label="Previous"><Ico s={10} sw={1.6}><path d="M6.500 1.500L3.500 5l3 3.500" /></Ico></Round>
                    <Tool $w={24} $lead={3} aria-label="Snap">
                      <Ico s={18} sw={1.4}><path d="M1 1.500h4L4 5H2z" fill="#f06ab0" stroke="#f06ab0" /><path d="M8.500 3h2M13 3h2M3 8.500v2M3 13v2" stroke="#b6427d" /><path d="M10 8.500l3-2.200c.9-.6 1.800.5 1 1.200l-1.500 1.300c2.300-.6 4.700 1.500 4.500 4.200-.2 2.800-2.600 4.300-5 3.800-2.600-.4-4.200-2-5.500-3.600-.6-.8.300-1.700 1.200-1.200l.8.500z" fill="#fff" stroke="none" /><path d="M9.500 13.500l2.500-2.500M11.500 14.500l2-2" stroke={c.bar} strokeWidth=".8" /></Ico>
                    </Tool>
                    <Tool $w={24} aria-label="Page settings"><Ico s={18} sw={1.5}><path d="M8.500 16H3.500A1.500 1.500 0 0 1 2 14.500V2.500A1.500 1.500 0 0 1 3.500 1H8l4.500 4.500V9M8 1v4.500h4.500" /><circle cx="14" cy="14.500" r="2.800" /></Ico></Tool>
                  </Tools>
                  <Rule $l={8} $r={8} />
                  <Tool $w={24} $ink="#fff" aria-label="Zoom out"><Ico s={14} sw={1.7}><path d="M2 7h10" /></Ico></Tool>
                  <Zoom>265%</Zoom>
                  <Tool $w={24} $ink="#fff" aria-label="Zoom in"><Ico s={14} sw={1.7}><path d="M1 7h12M7 1v12" /></Ico></Tool>
                  <Rule $l={8} $r={6} />
                  <Tool $w={24} $ink="#fff" aria-label="Fit to window"><Ico s={14} sw={1.6}><rect x="1" y="1" width="12" height="12" rx="1" /><path d="M4.500 10h1M8.500 10h1" /></Ico></Tool>
                  <Round aria-label="More view options"><Ico s={10} sw={1.5}><path d="M1.500 3.500L5 7l3.500-3.500" /></Ico></Round>
                </Tools>
              </BottomBar>
            </Work>

            <Panel>
              <PanelHead>
                <PanelTitle>Select</PanelTitle>
                <Tool $w={18} aria-label="Pin panel">
                  <svg width="14" height="18" viewBox="0 0 14 18" fill="#6d3a2b" stroke="#d9652c" strokeWidth="1.400" strokeLinejoin="round" aria-hidden="true"><path d="M3 1h8v1.800l-.8 1v3.700c1.800.8 2.600 2 2.800 4.500H1c.2-2.500 1-3.700 2.800-4.500V3.800L3 2.800zM7 12v5" /></svg>
                </Tool>
              </PanelHead>
              <Card>
                <Preview />
                <CardTitle>Roof Framing Plan - 1</CardTitle>
                <CardDate>Dec 1, 2022, 12:13 PM</CardDate>
                <Primary>Add Contributors</Primary>
              </Card>
            </Panel>
          </Body>
        </Column>
      </Shell>
    </>
  );
}
